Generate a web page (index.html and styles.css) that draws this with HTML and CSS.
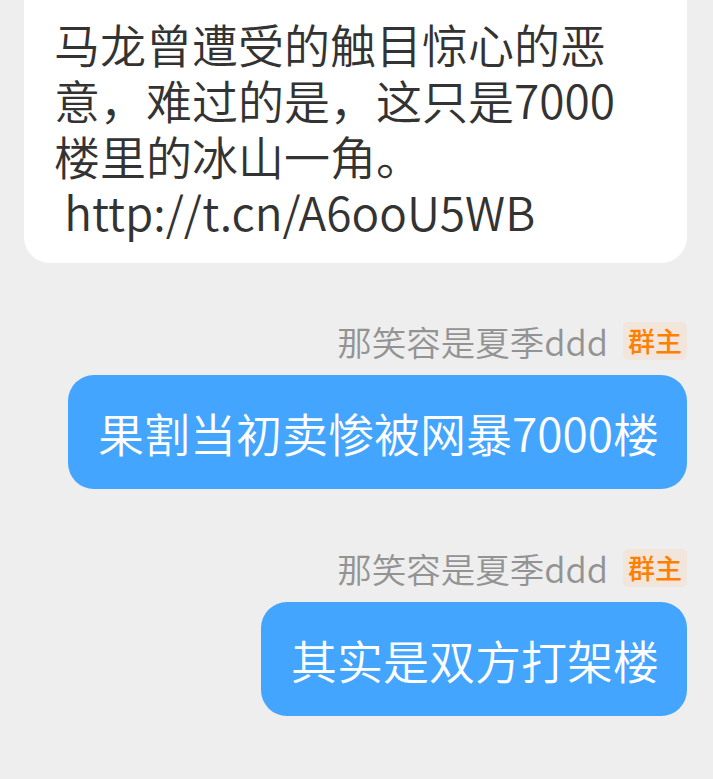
FILE: index.html
```html
<!DOCTYPE html>
<html lang="zh-CN">
<head>
    <meta charset="UTF-8">
    <meta name="viewport" content="width=device-width, initial-scale=1.0">
    <title>群聊</title>
    <link rel="stylesheet" href="styles.css">
</head>
<body>

<div class="chat">
    <div class="card">
        <p class="card-text">马龙曾遭受的触目惊心的恶<br>意，难过的是，这只是7000<br>楼里的冰山一角。<br>&nbsp;http://t.cn/A6ooU5WB</p>
    </div>

    <div class="message">
        <div class="sender">
            <span class="name">那笑容是夏季ddd</span>
            <span class="badge">群主</span>
        </div>
        <div class="bubble">果割当初卖惨被网暴7000楼</div>
    </div>

    <div class="message">
        <div class="sender">
            <span class="name">那笑容是夏季ddd</span>
            <span class="badge">群主</span>
        </div>
        <div class="bubble">其实是双方打架楼</div>
    </div>
</div>

</body>
</html>
```

FILE: styles.css
```css
body {
    margin: 0;
    background-color: #eeeeee;
    font-family: "Noto Sans CJK SC", "Noto Sans", sans-serif;
    font-weight: 350;
}

.chat {
    display: flex;
    flex-direction: column;
    padding: 0 26px 0 24px;
}

.card {
    background: #fff;
    border-radius: 0 0 26px 26px;
    padding: 15px 30px 24px 30px;
    margin-bottom: 59px;
}

.card-text {
    margin: 0;
    font-size: 46px;
    line-height: 56px;
    color: #333;
}

.message {
    display: flex;
    flex-direction: column;
    align-items: flex-end;
    margin-bottom: 60px;
}

.sender {
    display: flex;
    align-items: center;
    gap: 15px;
    height: 38px;
    margin-bottom: 15px;
}

.name {
    font-size: 34.5px;
    color: #939393;
}

.badge {
    background: #f2e6dc;
    color: #ff8000;
    font-size: 27px;
    font-weight: 500;
    line-height: 38px;
    padding: 0 5px;
    border-radius: 5px;
}

.bubble {
    background: #43a5fd;
    color: #fff;
    font-size: 46px;
    line-height: 56px;
    padding: 29px 28px 29px 30px;
    border-radius: 26px;
}

.message:first-of-type .bubble {
    letter-spacing: 0.3px;
}
```
